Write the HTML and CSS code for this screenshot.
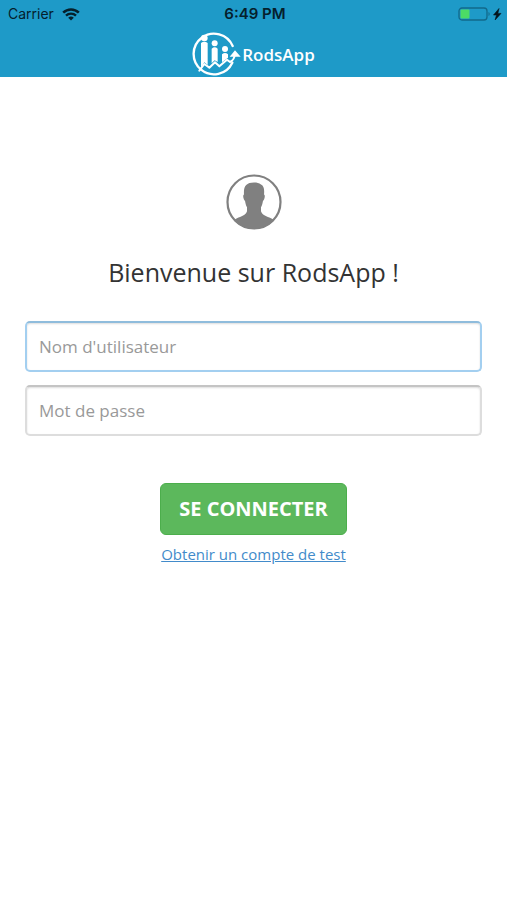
FILE: index.html
```html
<!DOCTYPE html>
<html lang="fr">
<head>
<meta charset="utf-8">
<meta name="viewport" content="width=device-width, initial-scale=1">
<title>RodsApp</title>
<link rel="stylesheet" href="styles.css">
</head>
<body>
<header class="top">
  <div class="status">
    <div class="status-left">
      <span>Carrier</span>
      <svg class="wifi" viewBox="0 0 18 13" aria-hidden="true">
        <path d="M1.200 4.600a11.200 11.200 0 0 1 15.600 0" fill="none" stroke="currentColor" stroke-width="2.600"/>
        <path d="M4 7.600a7.200 7.200 0 0 1 10 0" fill="none" stroke="currentColor" stroke-width="2.400"/>
        <path d="M9 12.600 6.200 9.800a4 4 0 0 1 5.600 0z" fill="currentColor"/>
      </svg>
    </div>
    <time class="clock">6:49 PM</time>
    <div class="status-right">
      <svg class="battery" viewBox="0 0 44 14" aria-hidden="true">
        <rect x="1" y="1" width="28" height="12" rx="3" fill="none" stroke="#12698a" stroke-width="1.300"/>
        <rect x="2.500" y="2.500" width="9" height="9" rx="1" fill="#4cdc65"/>
        <path d="M30.500 5v4c1.600-.5 1.600-3.500 0-4z" fill="#12698a"/>
        <path d="M41 1.500 35.500 8h3l-1.400 5L43 6.400h-3.200z" fill="#05141c" stroke="#05141c" stroke-width=".6"/>
      </svg>
    </div>
  </div>
  <div class="brand">
    <svg class="logo" viewBox="36 96 150 135" aria-hidden="true">
      <g fill="none" stroke="#fff" stroke-linecap="round" stroke-linejoin="round">
        <path d="M158 138A61 61 0 1 0 157 188" stroke-width="7"/>
        <path d="M58 212 73 192 88 203 105 187 118 199 141 179 150 186Q163 180 165 162" stroke-width="6"/>
      </g>
      <g fill="#fff">
        <circle cx="73" cy="114" r="10"/>
        <path d="M63 129Q73 122 83 129V195L73 187 63 203z"/>
        <circle cx="104" cy="130" r="9"/>
        <path d="M95 146Q104 138 113 146V186L104 181 95 190z"/>
        <circle cx="135" cy="147" r="9"/>
        <path d="M126 163Q135 155 144 163V173L126 187z"/>
        <path d="M165 151 182 170H149z"/>
      </g>
    </svg>
    <span class="brand-name">RodsApp</span>
  </div>
</header>
<main class="page">
  <svg class="avatar" viewBox="0 0 56 56" aria-hidden="true">
    <circle cx="28" cy="28" r="26.500" fill="#fff" stroke="#808080" stroke-width="2.200"/>
    <path d="M28 8.500c3 0 5 .5 7 2 3 1.500 3.500 5 3 10 1 .4.900 2 .5 3.500-.3 1.500-.8 2.500-1.500 2.700-.5 3-1 4.800-2 6.500v4c1 4 6 5 10 7 1.500.7 2.500 1.300 3 2A27 27 0 0 1 8 46.200c.5-.7 1.500-1.300 3-2 4-2 9-3 10-7v-4c-1-1.700-1.500-3.500-2-6.500-.7-.2-1.200-1.200-1.500-2.700-.4-1.500-.5-3.100.5-3.500-.6-8 2-12 10-12z" fill="#808080"/>
  </svg>
  <h1 class="title">Bienvenue sur RodsApp !</h1>
  <form class="form">
    <input class="field field-active" type="text" aria-label="Nom d'utilisateur" placeholder="Nom d'utilisateur">
    <input class="field" type="password" aria-label="Mot de passe" placeholder="Mot de passe">
    <button class="submit" type="button">SE CONNECTER</button>
  </form>
  <a class="link" href="#">Obtenir un compte de test</a>
</main>
</body>
</html>
```
FILE: styles.css
```css
* {
  box-sizing: border-box;
}

body {
  margin: 0;
  background: #fff;
  color: #333;
  font-family: "Open Sans", sans-serif;
}

.top {
  background: #1e9ac8;
}

.status {
  display: grid;
  grid-template-columns: 1fr auto 1fr;
  align-items: center;
  height: 28px;
  padding: 0 5px 0 8px;
  color: #05202c;
  font: 14px/20px Inter, sans-serif;
}

.status-left {
  display: flex;
  align-items: center;
  gap: 8px;
}

.wifi {
  width: 18px;
  height: 13px;
}

.clock {
  font-size: 15px;
  font-weight: 600;
}

.status-right {
  display: flex;
  justify-content: flex-end;
}

.battery {
  width: 44px;
  height: 14px;
}

.brand {
  display: flex;
  justify-content: center;
  align-items: flex-end;
  padding-top: 4px;
}

.logo {
  width: 50px;
  height: 45px;
}

.brand-name {
  color: #fff;
  font: 600 17px/45px "Open Sans", sans-serif;
}

.page {
  display: flex;
  flex-direction: column;
  align-items: center;
  padding: 97px 25px 32px;
}

.avatar {
  width: 56px;
  height: 56px;
}

.title {
  margin: 25px 0 31px;
  font-size: 25px;
  font-weight: 400;
  line-height: 35px;
}

.form {
  display: flex;
  flex-direction: column;
  align-items: center;
  gap: 13px;
  width: 100%;
}

.field {
  width: 100%;
  height: 51px;
  padding: 0 12px;
  border: 2px solid #ddd;
  border-top-color: #c4c4c4;
  border-radius: 5px;
  outline: 0;
  background: #fff;
  box-shadow: inset 0 1px 2px #ddd;
  color: #333;
  font: 17px/24px "Open Sans", sans-serif;
}

.field-active {
  border-color: #a3cff0;
  border-top-color: #8fbcdc;
}

.field::placeholder {
  color: #999;
  opacity: 1;
}

.submit {
  height: 52px;
  margin-top: 34px;
  padding: 0 18px;
  border: 1px solid #4cae4c;
  border-radius: 6px;
  background: #5cb85c;
  color: #fff;
  font: 700 20px/26px "Open Sans", sans-serif;
}

.link {
  margin-top: 9px;
  color: #428bca;
  font-size: 15px;
  line-height: 20px;
}
```
